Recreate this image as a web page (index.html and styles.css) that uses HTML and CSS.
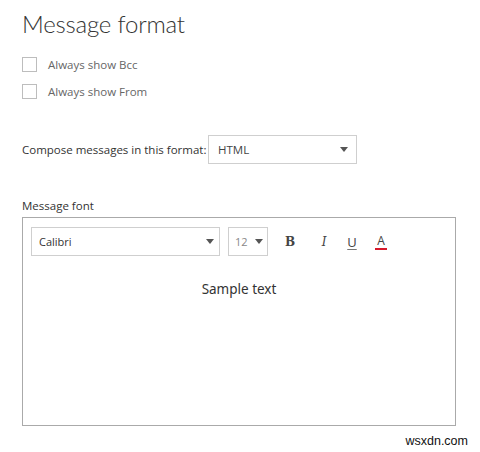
FILE: index.html
```html
<!DOCTYPE html>
<html>
<head>
<meta charset="utf-8">
<link rel="stylesheet" href="styles.css">
</head>
<body>
<div class="page">
  <h1 class="title">Message format</h1>
  <div class="checks">
    <label class="check"><span class="box"></span><span class="check-text">Always show Bcc</span></label>
    <label class="check"><span class="box"></span><span class="check-text">Always show From</span></label>
  </div>
  <div class="compose">
    <span class="compose-label">Compose messages in this format:</span>
    <div class="select select-format"><span class="select-value">HTML</span><span class="caret"></span></div>
  </div>
  <div class="font-label">Message font</div>
  <div class="editor">
    <div class="toolbar">
      <div class="select select-font"><span class="select-value small">Calibri</span><span class="caret"></span></div>
      <div class="select select-size"><span class="select-value size">12</span><span class="caret"></span></div>
      <span class="tool tool-b">B</span>
      <span class="tool tool-i">I</span>
      <span class="tool tool-u">U</span>
      <span class="tool tool-a">A</span>
    </div>
    <div class="sample">Sample text</div>
  </div>
  <div class="watermark">wsxdn.com</div>
</div>
</body>
</html>
```
FILE: styles.css
```css
html, body {
  margin: 0;
  padding: 0;
  background: #ffffff;
}
.page {
  width: 480px;
  height: 452px;
  padding: 0 0 0 22px;
  box-sizing: border-box;
  font-family: "Open Sans", "Noto Sans", sans-serif;
  color: #444;
  position: relative;
}
.title {
  margin: 0;
  padding-top: 7px;
  font-family: "Lato", "Open Sans", sans-serif;
  font-size: 24px;
  line-height: 33px;
  font-weight: 300;
  color: #333;
  letter-spacing: -0.2px;
}
.checks {
  margin-top: 17px;
  display: flex;
  flex-direction: column;
  gap: 12px;
}
.check {
  display: flex;
  align-items: center;
  height: 15px;
}
.box {
  width: 13px;
  height: 13px;
  border: 1px solid #bdbdbd;
  background: #fff;
}
.check-text {
  margin-left: 11px;
  font-size: 11.5px;
  color: #666;
}
.compose {
  margin-top: 36px;
  display: flex;
  align-items: center;
}
.compose-label {
  font-size: 11.5px;
  color: #333;
  width: 186px;
}
.select {
  box-sizing: border-box;
  height: 29px;
  border: 1px solid #cfcfcf;
  display: flex;
  align-items: center;
  justify-content: space-between;
  padding: 0 8px 0 9px;
  background: #fff;
}
.select-format {
  width: 149px;
}
.select-value {
  font-size: 11.5px;
  color: #444;
}
.select-value.small {
  font-size: 11px;
  color: #333;
}
.select-value.size {
  font-size: 11px;
  color: #888;
}
.caret {
  width: 0;
  height: 0;
  border-left: 4.5px solid transparent;
  border-right: 4.5px solid transparent;
  border-top: 5px solid #555;
}
.font-label {
  margin-top: 34px;
  font-size: 11.5px;
  color: #333;
  line-height: 16px;
}
.editor {
  margin-top: 3px;
  width: 434px;
  height: 209px;
  box-sizing: border-box;
  border: 1px solid #aaaaaa;
  padding: 9px 0 0 8px;
}
.toolbar {
  display: flex;
  align-items: center;
  height: 29px;
}
.select-font {
  width: 189px;
  padding: 0 5px 0 7px;
}
.select-size {
  width: 40px;
  margin-left: 8px;
  padding: 0 4px 0 6px;
}
.tool {
  font-family: "DejaVu Serif", "Liberation Serif", serif;
  font-size: 12px;
  color: #444;
  width: 14px;
  text-align: center;
}
.tool-b {
  margin-left: 15px;
  font-weight: bold;
}
.tool-i {
  margin-left: 20px;
  font-style: italic;
}
.tool-u {
  margin-left: 14px;
  font-family: "Open Sans", sans-serif;
  font-size: 13px;
  text-decoration: underline;
  text-decoration-color: #777;
  text-underline-offset: 2px;
}
.tool-a {
  margin-left: 16px;
  font-family: "Open Sans", sans-serif;
  font-size: 12px;
  border-bottom: 2px solid #d6192b;
  line-height: 15px;
  width: 12px;
}
.sample {
  margin-top: 24px;
  margin-left: -8px;
  text-align: center;
  font-family: "Noto Sans", "Open Sans", sans-serif;
  font-size: 13.5px;
  color: #333;
}
.watermark {
  position: absolute;
  right: 12px;
  bottom: 4px;
  font-family: "Liberation Sans", Arial, sans-serif;
  font-size: 12.5px;
  color: #111;
}
```
